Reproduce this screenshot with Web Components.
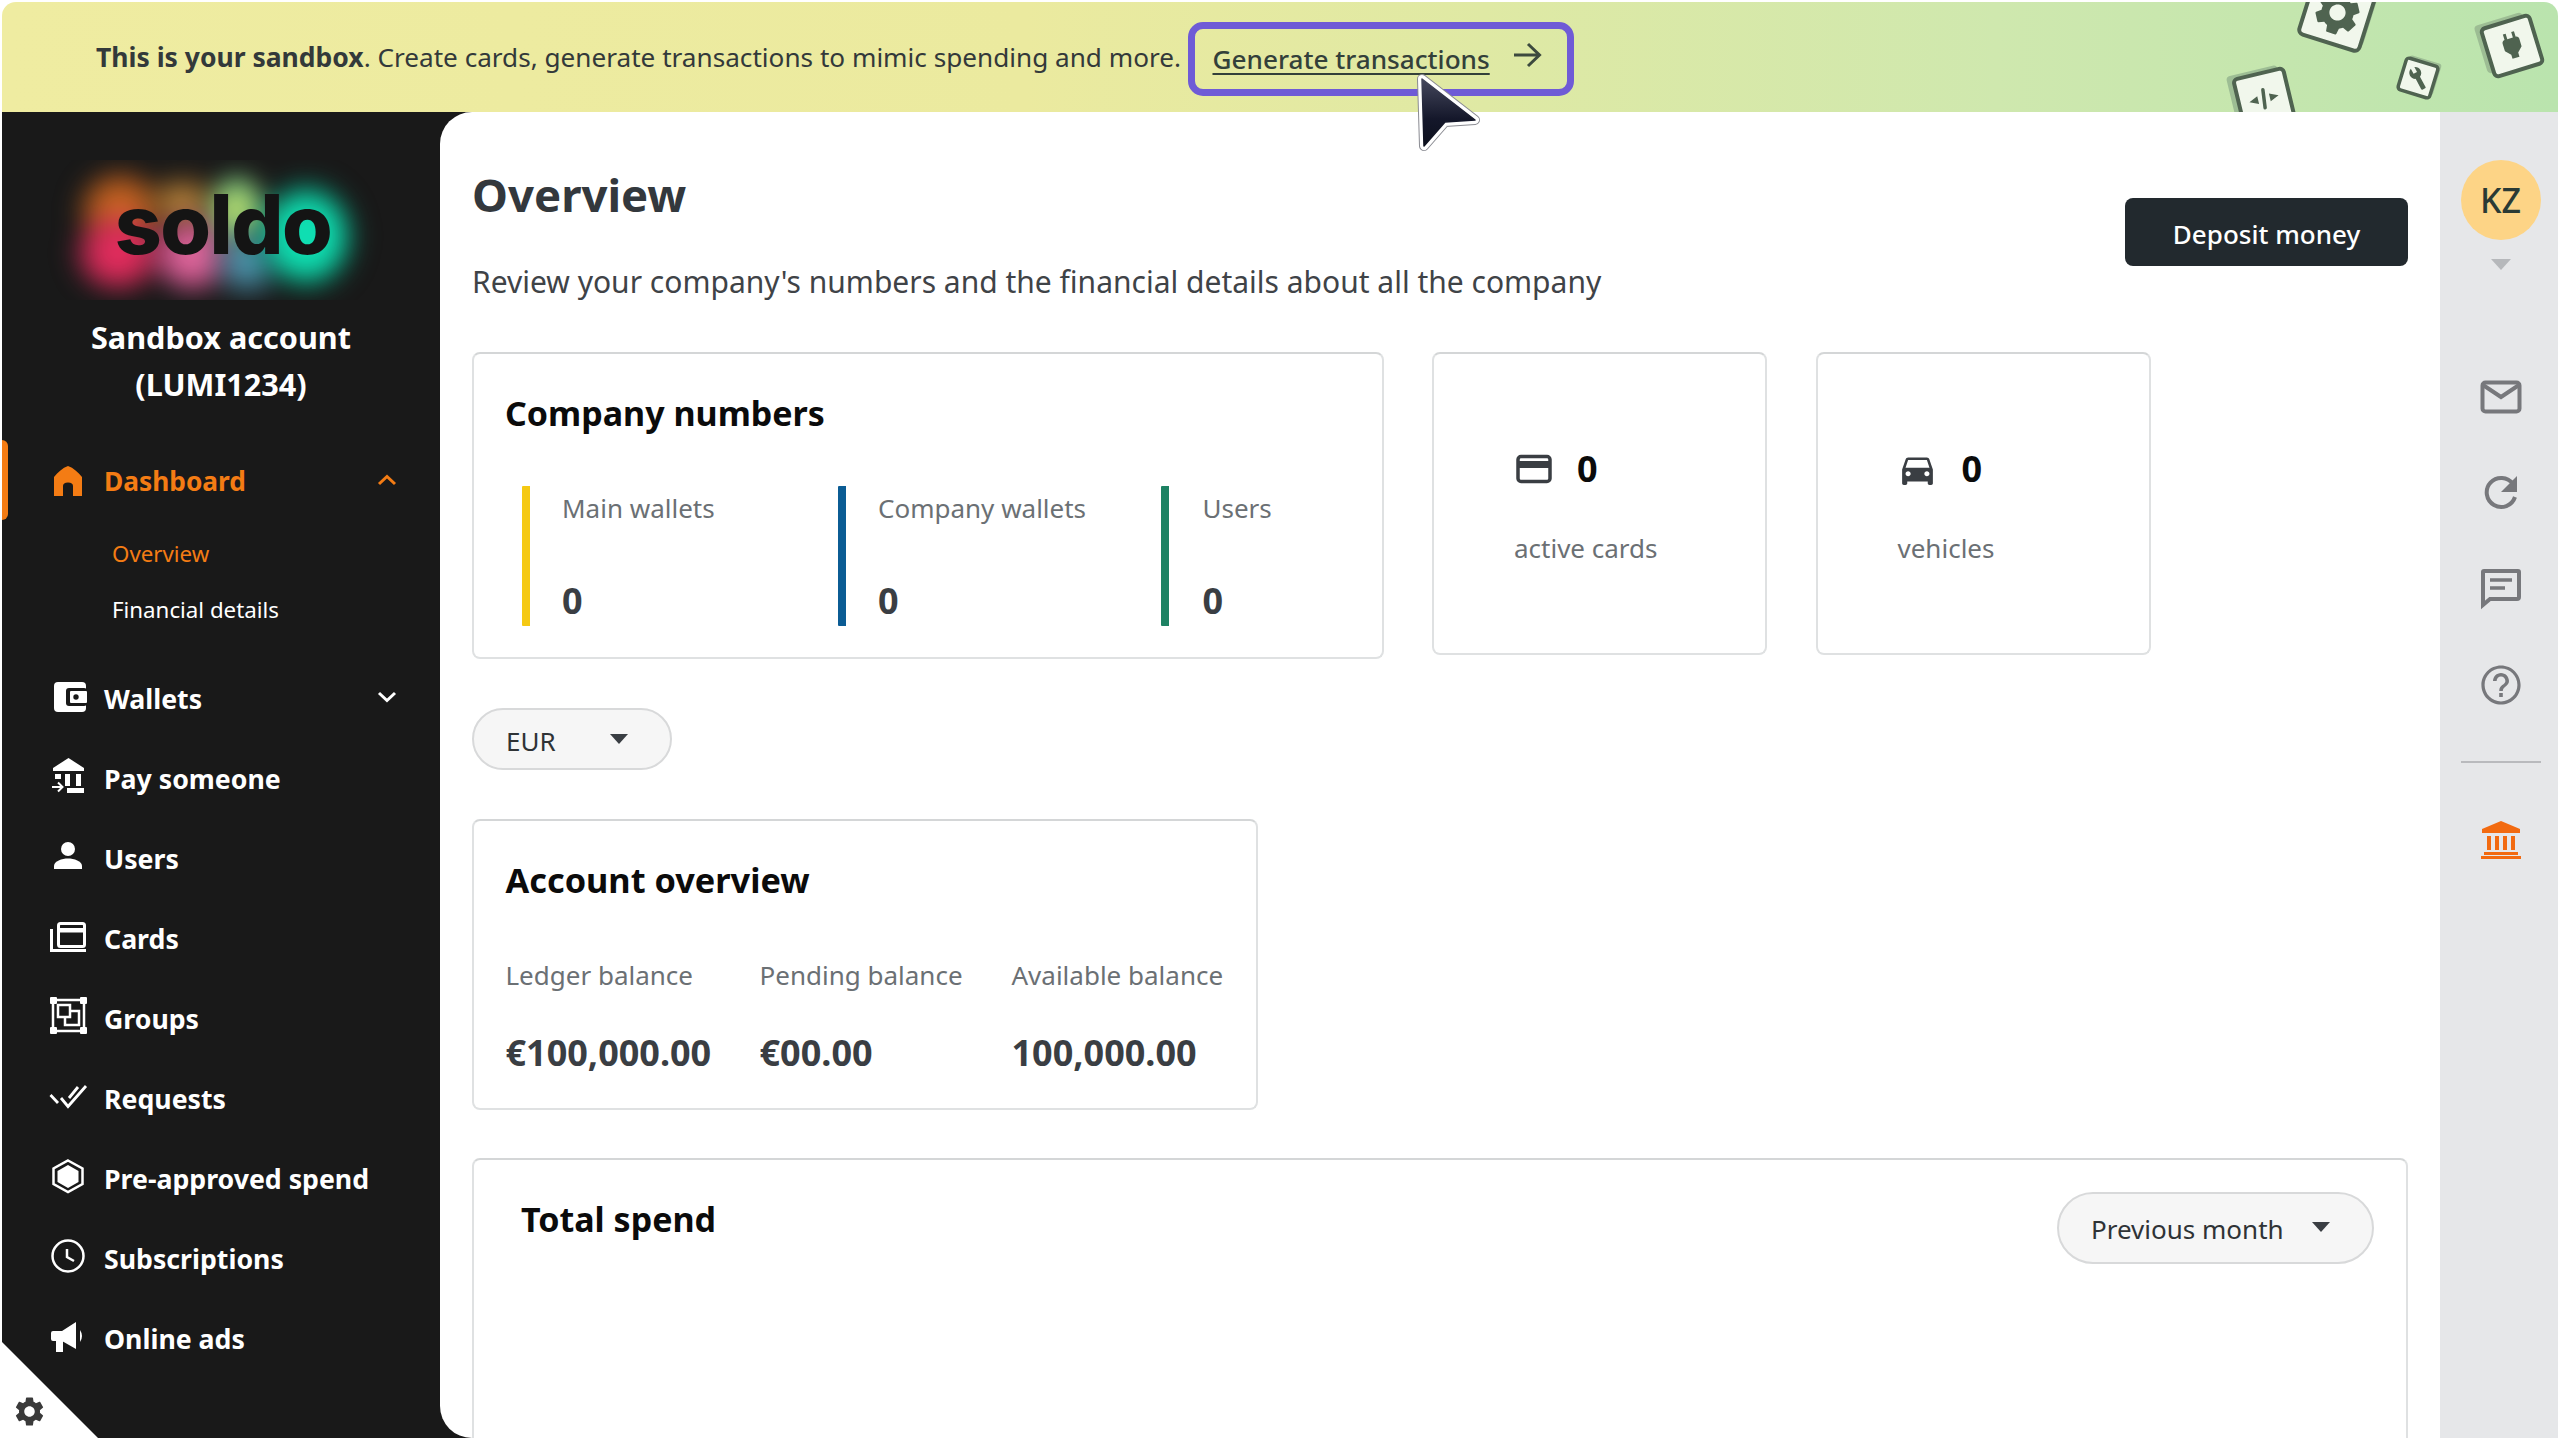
<!doctype html>
<html lang="en"><head><meta charset="utf-8"><title>Soldo sandbox</title>
<style>
html,body{margin:0;padding:0;width:2560px;height:1440px;overflow:hidden;background:#fff;font-family:"Noto Sans",sans-serif}
</style></head><body>
<sb-app>
  <sb-banner slot="banner"></sb-banner>
  <sb-sidebar slot="sidebar">
    <sb-nav-item icon="home" active chevron="up">Dashboard</sb-nav-item>
    <sb-sub-nav><sb-sub-item active>Overview</sb-sub-item><sb-sub-item>Financial details</sb-sub-item></sb-sub-nav>
    <sb-nav-item icon="wallet" chevron="down">Wallets</sb-nav-item>
    <sb-nav-item icon="pay">Pay someone</sb-nav-item>
    <sb-nav-item icon="user">Users</sb-nav-item>
    <sb-nav-item icon="cards">Cards</sb-nav-item>
    <sb-nav-item icon="groups">Groups</sb-nav-item>
    <sb-nav-item icon="requests">Requests</sb-nav-item>
    <sb-nav-item icon="hex">Pre-approved spend</sb-nav-item>
    <sb-nav-item icon="clock">Subscriptions</sb-nav-item>
    <sb-nav-item icon="ads">Online ads</sb-nav-item>
  </sb-sidebar>
  <sb-main slot="main">
    <sb-page-header slot="header"></sb-page-header>
    <div class="row">
      <sb-numbers-card></sb-numbers-card>
      <sb-stat-card icon="card" label="active cards"></sb-stat-card>
      <sb-stat-card icon="car" label="vehicles"></sb-stat-card>
    </div>
    <sb-select class="eur" value="EUR"></sb-select>
    <sb-account-card></sb-account-card>
    <sb-spend-card></sb-spend-card>
  </sb-main>
  <sb-rail slot="rail"></sb-rail>
  <sb-cursor></sb-cursor>
</sb-app>
<script>
const GEAR='M19.14,12.94c0.04-0.3,0.06-0.61,0.06-0.94c0-0.32-0.02-0.64-0.07-0.94l2.03-1.58c0.18-0.14,0.23-0.41,0.12-0.61l-1.92-3.32c-0.12-0.22-0.37-0.29-0.59-0.22l-2.39,0.96c-0.5-0.38-1.03-0.7-1.62-0.94L14.4,2.81c-0.04-0.24-0.24-0.41-0.48-0.41h-3.84c-0.24,0-0.43,0.17-0.47,0.41L9.25,5.35C8.66,5.59,8.12,5.92,7.63,6.29L5.24,5.33c-0.22-0.08-0.47,0-0.59,0.22L2.74,8.87C2.62,9.08,2.66,9.34,2.86,9.48l2.03,1.58C4.84,11.36,4.8,11.69,4.8,12s0.02,0.64,0.07,0.94l-2.03,1.58c-0.18,0.14-0.23,0.41-0.12,0.61l1.92,3.32c0.12,0.22,0.37,0.29,0.59,0.22l2.39-0.96c0.5,0.38,1.03,0.7,1.62,0.94l0.36,2.54c0.05,0.24,0.24,0.41,0.48,0.41h3.84c0.24,0,0.44-0.17,0.47-0.41l0.36-2.54c0.59-0.24,1.13-0.56,1.62-0.94l2.39,0.96c0.22,0.08,0.47,0,0.59-0.22l1.92-3.32c0.12-0.22,0.07-0.47-0.12-0.61L19.14,12.94z M12,15.6c-1.98,0-3.6-1.62-3.6-3.6s1.62-3.6,3.6-3.6s3.6,1.62,3.6,3.6S13.98,15.6,12,15.6z';
const NAV_ICONS={
 home:'<path fill="currentColor" d="M18 6C12.500 8 8 12 4 17V36H13V26Q13 22.500 18 22.500Q23 22.500 23 26V36H32V17C28 12 23.500 8 18 6Z"/>',
 wallet:'<rect x="4" y="5" width="32" height="30" rx="4" fill="currentColor"/><rect x="16" y="11" width="21" height="18" rx="3" fill="#191919"/><rect x="20" y="14" width="17" height="12" rx="1" fill="currentColor"/><circle cx="26" cy="20" r="2.700" fill="#191919"/>',
 pay:'<path fill="currentColor" d="M18.500 1L34 11V14H3V11Z"/><rect x="15" y="17" width="5" height="12" fill="currentColor"/><rect x="26" y="17" width="5" height="12" fill="currentColor"/><rect x="5" y="17" width="6" height="5" fill="currentColor"/><rect x="17" y="31" width="17" height="5" fill="currentColor"/><path fill="none" stroke="currentColor" stroke-width="2" d="M2 30H12M8 25.500L12.500 30L8 34.500"/>',
 user:'<circle cx="18" cy="12" r="7" fill="currentColor"/><path fill="currentColor" d="M4 32V29C4 24 12 21.500 18 21.500S32 24 32 29V32Z"/>',
 cards:'<rect x="8.500" y="6.500" width="26" height="23" rx="2" fill="none" stroke="currentColor" stroke-width="3"/><rect x="8.500" y="11" width="26" height="4.500" fill="currentColor"/><path fill="none" stroke="currentColor" stroke-width="3" d="M1.500 12V33.500H36"/>',
 groups:'<rect x="3" y="3" width="31" height="31" fill="none" stroke="currentColor" stroke-width="2.500"/><rect x="0" y="0" width="7" height="7" rx="1" fill="currentColor"/><rect x="30" y="0" width="7" height="7" rx="1" fill="currentColor"/><rect x="0" y="30" width="7" height="7" rx="1" fill="currentColor"/><rect x="30" y="30" width="7" height="7" rx="1" fill="currentColor"/><rect x="8" y="8" width="12" height="12" fill="none" stroke="currentColor" stroke-width="2.500"/><path fill="none" stroke="currentColor" stroke-width="2.500" d="M20 14H29V28H15V20"/>',
 requests:'<path fill="none" stroke="currentColor" stroke-width="2.800" d="M0.500 18L8 26M11 21L18 29.500L36 9M19 21L28 10"/>',
 hex:'<path fill="none" stroke="currentColor" stroke-width="2.500" d="M18 3.500L32.500 11.500V27L18 35L3.500 27V11.500Z"/><path fill="currentColor" d="M18 8L28.500 14V25L18 31L7.500 25V14Z"/>',
 clock:'<circle cx="18" cy="19" r="15.500" fill="none" stroke="currentColor" stroke-width="2.500"/><path fill="none" stroke="currentColor" stroke-width="2.500" d="M17 12V20L24 24"/>',
 ads:'<path fill="currentColor" d="M3 14H12L26 5V32L12 24H13V35H6V24H3Q1 24 1 22V16Q1 14 3 14Z"/><path fill="currentColor" d="M30 13Q34 19 30 25Z"/>'
};
function shadow(el,html){const r=el.attachShadow({mode:'open'});r.innerHTML=html;return r}

customElements.define('sb-app',class extends HTMLElement{constructor(){super();shadow(this,`<style>
:host{display:flex;flex-direction:column;position:relative;width:2556px;height:1436px;padding:2px;overflow:hidden}
.body{flex:1;display:flex;min-height:0;background:#191919}
</style><slot name="banner"></slot><div class="body"><slot name="sidebar"></slot><slot name="main"></slot><slot name="rail"></slot></div><slot></slot>`)}});

customElements.define('sb-banner',class extends HTMLElement{constructor(){super();shadow(this,`<style>
:host{display:flex;align-items:center;flex:none;height:110px;position:relative;overflow:hidden;border-radius:14px 14px 0 0;padding-left:94px;background:linear-gradient(90deg,#efeca1 0,#ebea9f 40%,#dfe9a4 58%,#cfe8ae 78%,#bae4ae 100%);color:#33393a;font-size:26.150px}
b{font-weight:700;font-size:26.500px}
.msg{white-space:pre}
a{margin:3px 0 0 7px;box-sizing:border-box;width:386px;height:74px;border:7.500px solid #6f5bd6;border-radius:15px;display:flex;align-items:center;gap:22px;padding:1px 0 0 17.500px;color:#33403a;text-decoration:none;font-weight:500}
a span{text-decoration:underline;text-underline-offset:4px;text-decoration-thickness:2px;white-space:nowrap}
a svg{margin-top:-8px;flex:none}
.decor{position:absolute;right:0;top:0}
</style><div class="msg"><b>This is your sandbox</b>. Create cards, generate transactions to mimic spending and more.</div>
<a href="#"><span>Generate transactions</span><svg width="30" height="26" viewBox="0 0 30 26"><path d="M2 13H27M16 2L27.500 13L16 24" fill="none" stroke="#3d4a3e" stroke-width="3"/></svg></a>
<svg class="decor" width="380" height="110" viewBox="2178 2 380 110">
 <g id="d">
  <g transform="translate(2337.500 12.500) rotate(17.500)"><rect x="-29" y="-37" width="63" height="63" rx="5" fill="#9dbd94"/><rect x="-31.500" y="-31.500" width="63" height="63" rx="5" fill="#f1f7ec" stroke="#4f6350" stroke-width="4"/><g transform="translate(-27 -27) scale(2.250)"><path fill="#4f6350" d="${GEAR}"/></g></g>
  <g transform="translate(2512 46) rotate(-17)"><rect x="-31" y="-30" width="50" height="50" rx="4" fill="#9dbd94"/><rect x="-25" y="-25" width="50" height="50" rx="4" fill="#f1f7ec" stroke="#4f6350" stroke-width="4"/><g transform="translate(-17 -18) scale(1.450)"><path fill="#4f6350" d="M16.010 7L16 3h-2v4h-4V3H8v4h-.01C7 6.990 6 7.990 6 8.990v5.490L9.500 18v3h5v-3l3.500-3.510v-5.500c0-1-1-2-1.990-1.990z"/></g></g>
  <g transform="translate(2418 78) rotate(17)"><rect x="-14" y="-20" width="33" height="33" rx="3" fill="#9dbd94"/><rect x="-16.500" y="-16.500" width="33" height="33" rx="3" fill="#f1f7ec" stroke="#4f6350" stroke-width="3.500"/><g transform="translate(-11 -11) scale(.92)"><path fill="#4f6350" d="M22.700 19l-9.100-9.100c.9-2.300.4-5-1.500-6.900-2-2-5-2.400-7.400-1.300L9 6 6 9 1.600 4.700C.4 7.100.9 10.100 2.900 12.100c1.900 1.900 4.600 2.400 6.900 1.500l9.100 9.100c.4.4 1 .4 1.400 0l2.300-2.300c.5-.4.5-1.100.1-1.400z"/></g></g>
  <g transform="translate(2264 98.700) rotate(-13.500)"><rect x="-32" y="-30" width="52" height="52" rx="4" fill="#9dbd94"/><rect x="-25.500" y="-25.500" width="51" height="51" rx="4" fill="#f1f7ec" stroke="#4f6350" stroke-width="4"/><path fill="#4f6350" d="M-6 -4V4L-15 0ZM6 -4V4L15 0Z"/><path stroke="#4f6350" stroke-width="3.500" stroke-linecap="round" d="M1 -9L-1 9"/></g>
 </g></svg>`)}});

customElements.define('sb-icon',class extends HTMLElement{constructor(){super();const n=this.getAttribute('name');shadow(this,`<style>:host{display:block;width:36px;height:44px;flex:none}svg{display:block;overflow:visible}</style><svg width="36" height="44" viewBox="0 0 36 44">${NAV_ICONS[n]||''}</svg>`)}});

customElements.define('sb-nav-item',class extends HTMLElement{constructor(){super();const ic=this.getAttribute('icon'),ch=this.getAttribute('chevron');const act=this.hasAttribute('active');
shadow(this,`<style>
:host{display:flex;align-items:center;height:80px;box-sizing:border-box;padding:0 43px 0 48px;position:relative;color:${act?'#f47c14':'#fff'};font-size:${act?26.3:26.7}px;font-weight:700;white-space:nowrap}
sb-icon{margin-right:18px}
.t{margin-top:-2px}
.ch{margin-left:auto;margin-top:-4px}
.bar{position:absolute;left:0;top:-2px;width:6px;height:80px;background:#f47c14;border-radius:0 6px 6px 0}
</style>${act?'<div class="bar"></div>':''}<sb-icon name="${ic}"></sb-icon><span class="t"><slot></slot></span>${ch?`<svg class="ch" width="20" height="12" viewBox="0 0 20 12"><path fill="none" stroke="currentColor" stroke-width="3" d="${ch=='up'?'M2 10L10 2.500L18 10':'M2 2L10 9.500L18 2'}"/></svg>`:''}`)}});

customElements.define('sb-sub-nav',class extends HTMLElement{constructor(){super();shadow(this,`<style>:host{display:flex;flex-direction:column;padding:3px 0 21px 110px}</style><slot></slot>`)}});
customElements.define('sb-sub-item',class extends HTMLElement{constructor(){super();const a=this.hasAttribute('active');shadow(this,`<style>:host{display:flex;align-items:center;height:56.500px;font-size:22.300px;color:${a?'#f47c14':'#fff'}}</style><slot></slot>`)}});

customElements.define('sb-logo',class extends HTMLElement{constructor(){super();shadow(this,`<style>
:host{display:block;position:relative;width:438px;height:140px;overflow:hidden}
.glow{position:absolute;inset:0;filter:blur(11px);background:
 radial-gradient(ellipse 56px 62px at 304px 76px,#0fe3b6 0,#0fd8ac 55%,rgba(10,120,95,.6) 80%,transparent 100%),
 radial-gradient(ellipse 40px 42px at 245px 103px,#5ab8d6 0,rgba(60,110,130,.6) 65%,transparent 100%),
 radial-gradient(ellipse 34px 42px at 235px 50px,#e0e45c 0,#7cc47c 55%,transparent 100%),
 radial-gradient(ellipse 46px 45px at 190px 95px,#ee76a8 0,#c9548a 50%,transparent 100%),
 radial-gradient(ellipse 44px 32px at 180px 42px,#d89e49 0,rgba(150,100,40,.7) 55%,transparent 100%),
 radial-gradient(ellipse 50px 46px at 116px 93px,#f02f63 0,#cf2a56 50%,transparent 100%),
 radial-gradient(ellipse 48px 46px at 118px 50px,#e0702a 0,#a8551c 55%,transparent 100%)}
.t{position:absolute;left:0;right:0;top:-5px;text-align:center;font:800 82px/140px Inter,sans-serif;letter-spacing:-1.500px;color:#141414;padding-left:4px}
</style><div class="glow"></div><div class="t">soldo</div>`)}});

customElements.define('sb-sidebar',class extends HTMLElement{constructor(){super();shadow(this,`<style>
:host{display:flex;flex-direction:column;flex:none;width:438px;background:#191919;position:relative;overflow:hidden;color:#fff}
.top{padding-top:48px}
h2{margin:14px 0 34px;font-size:30.600px;line-height:47px;font-weight:700;text-align:center;color:#fff}
.corner{position:absolute;left:0;bottom:0;width:96px;height:96px;background:#fff;clip-path:polygon(0 0,100% 100%,0 100%)}
.gear{position:absolute;left:10px;bottom:9px}
</style><div class="top"><sb-logo></sb-logo><h2>Sandbox account<br>(LUMI1234)</h2></div><slot></slot><div class="corner"></div><svg class="gear" width="35" height="35" viewBox="0 0 24 24"><path fill="#3a3a3a" d="${GEAR}"/></svg>`)}});

customElements.define('sb-main',class extends HTMLElement{constructor(){super();shadow(this,`<style>
:host{display:block;flex:1;min-width:0;background:#fff;border-radius:32px 0 0 32px;overflow:hidden;box-sizing:border-box;padding:52px 32px 0}
::slotted(.row){display:flex;gap:48.500px;align-items:flex-start}
::slotted(sb-select.eur){margin-top:49px}
::slotted(sb-account-card){margin-top:49px}
::slotted(sb-spend-card){margin-top:48px}
</style><slot name="header"></slot><slot></slot>`)}});

customElements.define('sb-page-header',class extends HTMLElement{constructor(){super();shadow(this,`<style>
:host{display:flex;justify-content:space-between;align-items:flex-start;margin-bottom:50px}
h1{margin:0;font-size:45.500px;line-height:60px;font-weight:700;color:#33383d}
p{margin:38px 0 0;font-size:30px;line-height:40px;color:#3f4347;white-space:nowrap}
button{margin-top:34px;width:283px;height:68px;background:#22292e;color:#fff;border:0;border-radius:8px;font:500 26px "Noto Sans",sans-serif;padding:4px 0 0}
</style><div><h1>Overview</h1><p>Review your company's numbers and the financial details about all the company</p></div><button>Deposit money</button>`)}});

const CARD=`display:block;box-sizing:border-box;background:#fff;border:2px solid #dfe1e2;border-top-color:#d4d6d7;border-radius:8px;`;
customElements.define('sb-metric',class extends HTMLElement{constructor(){super();shadow(this,`<style>
:host{display:block;box-sizing:border-box;height:140px;border-left:8px solid var(--c);padding-left:32px;border-radius:1px}
.l{margin-top:2px;font-size:26px;line-height:40px;color:#6b7074}
.n{margin-top:53px;font-size:36px;line-height:40px;font-weight:700;color:#3a3e43}
</style><div class="l"><slot></slot></div><div class="n">0</div>`)}});
customElements.define('sb-numbers-card',class extends HTMLElement{constructor(){super();shadow(this,`<style>
:host{${CARD}flex:none;width:911.500px;height:307px;padding:34px 0 0 31px}
h3{margin:0;font-size:34px;line-height:50px;font-weight:700;color:#0b0b0b}
.m{display:grid;grid-template-columns:316px 323px 1fr;margin:48px 0 0 17px}
</style><h3>Company numbers</h3><div class="m"><sb-metric style="--c:#f5c913">Main wallets</sb-metric><sb-metric style="--c:#0b5c94">Company wallets</sb-metric><sb-metric style="--c:#1d8263;padding-left:33.500px">Users</sb-metric></div>`)}});

customElements.define('sb-stat-card',class extends HTMLElement{constructor(){super();const car=this.getAttribute('icon')=='car';shadow(this,`<style>
:host{${CARD}flex:none;width:335px;height:303px;padding:90px 0 0 79px}
.r{display:flex;align-items:center;gap:${car?24:23}px;height:50px;font-size:36px;font-weight:700;color:#0b0b0b;line-height:50px}
svg{flex:none;display:block}
.l{margin:34px 0 0 1px;font-size:26px;line-height:40px;color:#6b7074}
</style><div class="r">${car?`<svg width="41" height="41" viewBox="0 0 24 24"><path fill="#3a3e43" d="M18.920 6.010C18.720 5.420 18.160 5 17.500 5h-11c-.66 0-1.210.42-1.420 1.010L3 12v8c0 .55.45 1 1 1h1c.55 0 1-.45 1-1v-1h12v1c0 .55.45 1 1 1h1c.55 0 1-.45 1-1v-8l-2.080-5.990zM6.500 16c-.83 0-1.500-.67-1.500-1.500S5.670 13 6.500 13s1.500.67 1.500 1.500S7.330 16 6.500 16zm11 0c-.83 0-1.500-.67-1.500-1.500s.67-1.500 1.500-1.500 1.500.67 1.500 1.500-.67 1.500-1.500 1.500zM5 11l1.500-4.500h11L19 11H5z"/></svg>`:`<svg width="41" height="41" viewBox="0 0 41 41"><rect x="5" y="7.500" width="32" height="25" rx="3" fill="none" stroke="#3a3e43" stroke-width="3.500"/><rect x="5" y="12" width="32" height="7" fill="#3a3e43"/></svg>`}<span>0</span></div><div class="l">${this.getAttribute('label')}</div>`)}});

customElements.define('sb-select',class extends HTMLElement{constructor(){super();const big=this.hasAttribute('big');shadow(this,`<style>
:host{display:flex;box-sizing:border-box;align-items:center;background:#f6f6f6;border:2px solid #d8d9da;color:#2f3336;font-size:26px;
 width:${big?'317px':'200px'};height:${big?'72px':'62px'};border-radius:${big?'36px':'31px'};padding:${big?'2px':'4px'} 42px 0 32px;justify-content:space-between}
svg{margin-top:-4px}
</style><span>${this.getAttribute('value')}</span><svg width="18" height="10" viewBox="0 0 18 10"><path fill="#3a3e43" d="M0 0H18L9 10Z"/></svg>`)}});

customElements.define('sb-account-card',class extends HTMLElement{constructor(){super();shadow(this,`<style>
:host{${CARD}width:786px;height:291px;padding:34px 0 0 31.500px}
h3{margin:0;font-size:34.300px;line-height:50px;font-weight:700;color:#0b0b0b}
.g{display:grid;grid-template-columns:254px 252px 1fr;margin-top:50px}
.l{font-size:26px;line-height:40px;color:#6b7074;white-space:nowrap}
.v{margin-top:33px;font-size:36px;line-height:50px;font-weight:700;color:#3a3e43;white-space:nowrap}
</style><h3>Account overview</h3><div class="g">
<div><div class="l">Ledger balance</div><div class="v">€100,000.00</div></div>
<div><div class="l">Pending balance</div><div class="v">€00.00</div></div>
<div><div class="l">Available balance</div><div class="v">100,000.00</div></div></div>`)}});

customElements.define('sb-spend-card',class extends HTMLElement{constructor(){super();shadow(this,`<style>
:host{${CARD}height:500px;padding:32px 32px 0 47px;border-bottom:0}
.h{display:flex;justify-content:space-between;align-items:flex-start}
h3{margin:2px 0 0;font-size:34px;line-height:50px;font-weight:700;color:#0b0b0b}
</style><div class="h"><h3>Total spend</h3><sb-select big value="Previous month"></sb-select></div>`)}});

customElements.define('sb-rail',class extends HTMLElement{constructor(){super();shadow(this,`<style>
:host{display:flex;flex-direction:column;align-items:center;flex:none;width:118px;background:#e6e7e9;padding:48px 0 0 3px;box-sizing:border-box;color:#77787c}
.av{width:80px;height:80px;border-radius:50%;background:#fdd486;color:#2a3a35;display:flex;align-items:center;justify-content:center;font-size:34px;font-weight:500}
svg{display:block;flex:none}
hr{width:80px;border:0;border-top:2px solid #b9babd;margin:0}
</style><div class="av">KZ</div>
<svg style="margin-top:19px" width="20" height="11" viewBox="0 0 20 11"><path fill="#b6b8bb" d="M0 0H20L10 11Z"/></svg>
<svg style="margin-top:109px" width="44" height="36" viewBox="0 0 44 36"><rect x="3.500" y="3.500" width="37" height="29" rx="3" fill="none" stroke="currentColor" stroke-width="4"/><path d="M4 6L22 18L40 6" fill="none" stroke="currentColor" stroke-width="4"/></svg>
<svg style="margin-top:58px" width="40" height="40" viewBox="0 0 40 40"><path fill="none" stroke="currentColor" stroke-width="4" d="M32 11A14.500 14.500 0 1 0 34 24"/><path fill="currentColor" d="M36 3V19H20Z"/></svg>
<svg style="margin-top:53px" width="44" height="44" viewBox="0 0 44 44"><path fill="none" stroke="currentColor" stroke-width="4" d="M5 5H39Q40 5 40 6V31Q40 33 38 33H11L4 39V6Q4 5 5 5Z"/><path fill="none" stroke="currentColor" stroke-width="3.500" d="M11 14H33M11 22H26"/></svg>
<svg style="margin-top:51px" width="48" height="48" viewBox="0 0 24 24"><path fill="currentColor" d="M11.100 18h1.800v-2h-1.800v2zM12 2.200C6.600 2.200 2.200 6.600 2.200 12S6.600 21.800 12 21.800 21.800 17.400 21.800 12 17.400 2.200 12 2.200zm0 18c-4.500 0-8.200-3.700-8.200-8.200S7.500 3.800 12 3.800s8.200 3.700 8.200 8.200-3.700 8.200-8.200 8.200zM12 6c-2.200 0-4 1.800-4 4h1.800c0-1.200 1-2.200 2.200-2.200s2.200 1 2.200 2.200c0 2-3.100 1.750-3.100 5h1.800c0-2.250 3.100-2.500 3.100-5 0-2.200-1.800-4-4-4z"/></svg>
<hr style="margin-top:52px">
<svg style="margin-top:57px" width="42" height="40" viewBox="0 0 42 40"><path fill="#f26a10" d="M21 1L40 9V13H2V9ZM7 16H11V30H7ZM15 16H19V30H15ZM23 16H27V30H23ZM31 16H35V30H31ZM4 32H38V35H4ZM1 36H41V39H1Z"/></svg>`)}});

customElements.define('sb-cursor',class extends HTMLElement{constructor(){super();shadow(this,`<style>
:host{position:absolute;left:1412px;top:68px;width:80px;height:90px}
</style><svg width="80" height="90" viewBox="1412 68 80 90"><defs><linearGradient id="g" x1="0" y1="0" x2="0" y2="1"><stop offset="0" stop-color="#44475c"/><stop offset=".6" stop-color="#14172a"/><stop offset="1" stop-color="#0c0f1c"/></linearGradient></defs>
<path d="M1422 79L1475 120L1445 122L1424 146Z" fill="#8a8b92" stroke="#8a8b92" stroke-width="10" stroke-linejoin="round"/>
<path d="M1422 79L1475 120L1445 122L1424 146Z" fill="#fff" stroke="#fff" stroke-width="8" stroke-linejoin="round"/>
<path d="M1422 79L1475 120L1445 122L1424 146Z" fill="url(#g)" stroke="url(#g)" stroke-width="1.500" stroke-linejoin="round"/></svg>`)}});
</script>
</body></html>
